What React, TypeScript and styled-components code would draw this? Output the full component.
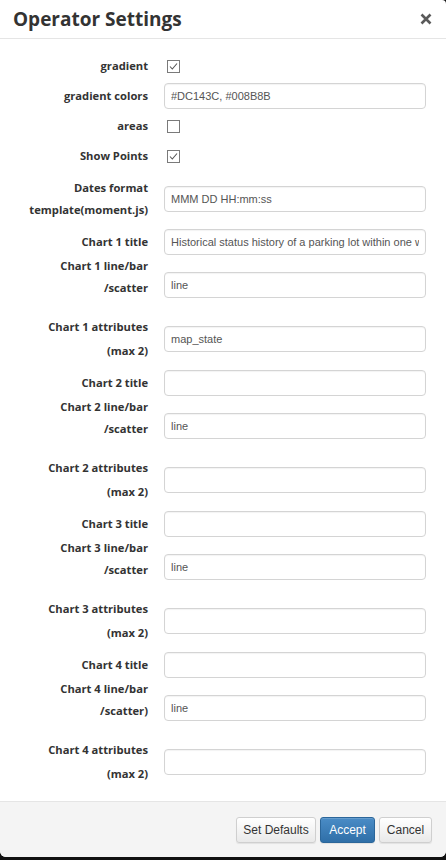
import React from "react";
import styled, { createGlobalStyle } from "styled-components";

const Global = createGlobalStyle`
  html, body { margin: 0; padding: 0; background: #111; }
  body { font-family: "Open Sans", "Liberation Sans", sans-serif; color: #333; }
  * { box-sizing: border-box; }
`;

const Modal = styled.div`
  width: 446px;
  height: 857px;
  background: #fff;
  border-radius: 0 4px 6px 6px;
  overflow: hidden;
  display: flex;
  flex-direction: column;
`;

const Header = styled.div`
  height: 39px;
  border-bottom: 1px solid #e5e5e5;
  display: flex;
  align-items: center;
  justify-content: space-between;
  padding: 0 13px 1px 13px;
`;

const Title = styled.h4`
  margin: 0;
  font-family: "Open Sans", sans-serif;
  font-weight: 700;
  font-size: 19px;
  line-height: 24px;
  color: #333;
`;

const Close = styled.button`
  border: 0;
  background: transparent;
  padding: 0;
  width: 14px;
  height: 14px;
  display: flex;
  align-items: center;
  justify-content: center;
`;

const Body = styled.div`
  flex: 1;
  padding: 0 20px 0 0;
  display: flex;
  flex-direction: column;
`;

const Row = styled.div<{ $mt: number; $align?: string }>`
  display: flex;
  align-items: ${(p) => p.$align || "center"};
  margin-top: ${(p) => p.$mt}px;
`;

const Label = styled.label<{ $lh: number }>`
  width: 148px;
  flex: none;
  text-align: right;
  font-family: "Open Sans", sans-serif;
  font-weight: 700;
  font-size: 11.2px;
  line-height: ${(p) => p.$lh}px;
  color: #333;
`;

const Control = styled.div<{ $mt?: number }>`
  flex: 1;
  margin-left: 16px;
  margin-top: ${(p) => p.$mt || 0}px;
  display: flex;
`;

const Input = styled.input`
  width: 100%;
  height: 26px;
  border: 1px solid #d4d4d4;
  border-radius: 4px;
  padding: 0 6px;
  font-family: "Liberation Sans", Arial, sans-serif;
  font-size: 11px;
  color: #555;
  background: #fff;
  box-shadow: inset 0 1px 1px rgba(0, 0, 0, 0.05);
  outline: none;
`;

const Check = styled.span`
  display: inline-flex;
  width: 13px;
  height: 13px;
  margin-left: 3px;
  border: 1px solid #7a7a7a;
  background: #fff;
  align-items: center;
  justify-content: center;
`;

const Footer = styled.div`
  height: 56px;
  border-top: 1px solid #e5e5e5;
  background: #f4f4f4;
  display: flex;
  justify-content: flex-end;
  align-items: flex-start;
  padding: 15px 14px 0 0;
  gap: 4px;
`;

const Button = styled.button<{ $primary?: boolean; $w: number }>`
  width: ${(p) => p.$w}px;
  height: 26px;
  border-radius: 3px;
  font-family: "Liberation Sans", Arial, sans-serif;
  font-size: 12px;
  padding: 0;
  cursor: pointer;
  color: ${(p) => (p.$primary ? "#fff" : "#333")};
  border: 1px solid ${(p) => (p.$primary ? "#2b669a" : "#cfcfcf")};
  background: ${(p) =>
    p.$primary
      ? "linear-gradient(#4a8cc6, #2f6fa8)"
      : "linear-gradient(#fff, #e9e9e9)"};
  box-shadow: inset 0 1px 0 rgba(255, 255, 255, 0.15), 0 1px 1px rgba(0, 0, 0, 0.075);
`;

const CheckBox = ({ checked }: { checked: boolean }) => (
  <Check>
    {checked && (
      <svg width="11" height="11" viewBox="0 0 11 11">
        <path d="M2 5.5 L4.3 8 L9 2.5" fill="none" stroke="#555" strokeWidth="1.1" />
      </svg>
    )}
  </Check>
);

type Field = {
  label: React.ReactNode;
  kind: "check" | "text";
  value?: string;
  checked?: boolean;
  mt: number;
  lh: number;
  align?: string;
  cmt?: number;
};

const fields: Field[] = [
  { label: "gradient", kind: "check", checked: true, mt: 16, lh: 22 },
  { label: "gradient colors", kind: "text", value: "#DC143C, #008B8B", mt: 6, lh: 26 },
  { label: "areas", kind: "check", checked: false, mt: 6, lh: 22 },
  { label: "Show Points", kind: "check", checked: true, mt: 8, lh: 22 },
  { label: <>Dates format<br />template(moment.js)</>, kind: "text", value: "MMM DD HH:mm:ss", mt: 10, lh: 22 },
];

const charts = [1, 2, 3, 4];
charts.forEach((n) => {
  fields.push({
    label: `Chart ${n} title`,
    kind: "text",
    value: n === 1 ? "Historical status history of a parking lot within one week" : "",
    mt: n === 1 ? 8 : 7,
    lh: 26,
  });
  fields.push({
    label: <>Chart {n} line/bar<br />{n === 4 ? "/scatter)" : "/scatter"}</>,
    kind: "text",
    value: "line",
    mt: 0,
    lh: 22,
    align: "flex-start",
    cmt: 17,
  });
  fields.push({
    label: <>Chart {n} attributes<br />(max 2)</>,
    kind: "text",
    value: n === 1 ? "map_state" : "",
    mt: 16,
    lh: 24,
  });
});

export default function App() {
  return (
    <>
      <Global />
      <Modal>
        <Header>
          <Title>Operator Settings</Title>
          <Close aria-label="close">
            <svg width="12" height="12" viewBox="0 0 12 12">
              <path d="M1.5 1.5 L10.5 10.5 M10.5 1.5 L1.5 10.5" stroke="#5a5a5a" strokeWidth="2.6" />
            </svg>
          </Close>
        </Header>
        <Body>
          {fields.map((f, i) => (
            <Row key={i} $mt={f.mt} $align={f.align}>
              <Label $lh={f.lh}>{f.label}</Label>
              <Control $mt={f.cmt}>
                {f.kind === "check" ? (
                  <CheckBox checked={!!f.checked} />
                ) : (
                  <Input type="text" defaultValue={f.value} />
                )}
              </Control>
            </Row>
          ))}
        </Body>
        <Footer>
          <Button $w={80}>Set Defaults</Button>
          <Button $w={55} $primary>Accept</Button>
          <Button $w={53}>Cancel</Button>
        </Footer>
      </Modal>
    </>
  );
}
